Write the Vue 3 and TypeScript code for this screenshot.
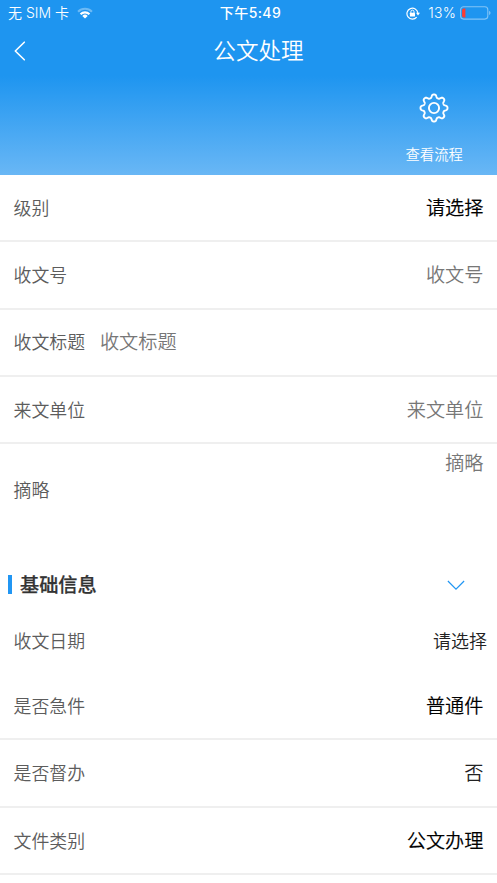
<script setup lang="ts">
interface Field {
  label: string
  value: string
  tone: 'strong' | 'hint' | 'dark'
  kind?: 'inline' | 'area' | 'date'
}

const mainFields: Field[] = [
  { label: '级别', value: '请选择', tone: 'strong' },
  { label: '收文号', value: '收文号', tone: 'hint' },
  { label: '收文标题', value: '收文标题', tone: 'hint', kind: 'inline' },
  { label: '来文单位', value: '来文单位', tone: 'hint' },
  { label: '摘略', value: '摘略', tone: 'hint', kind: 'area' },
]

const baseFields: Field[] = [
  { label: '收文日期', value: '请选择', tone: 'dark', kind: 'date' },
  { label: '是否急件', value: '普通件', tone: 'strong' },
  { label: '是否督办', value: '否', tone: 'dark' },
  { label: '文件类别', value: '公文办理', tone: 'strong' },
]

// Eight-toothed gear outline, with rounded teeth and valleys
function gearPath(): string {
  const points: string[] = []
  const steps = 192
  for (let i = 0; i < steps; i++) {
    const a = (i / steps) * Math.PI * 2
    const r = 11.9 + 1.6 * Math.tanh(1.6 * Math.cos(8 * a)) / Math.tanh(1.6)
    points.push(`${(15 + r * Math.cos(a)).toFixed(2)} ${(15 + r * Math.sin(a)).toFixed(2)}`)
  }
  return `M${points.join('L')}Z`
}

const gear = gearPath()
</script>

<template>
  <div class="page">
    <header class="top">
      <div class="status">
        <div class="side left">
          <span>无 SIM 卡</span>
          <svg class="wifi" width="16" height="12" viewBox="0 0 16 12">
            <path d="M0.3 3.9A11 11 0 0 1 15.7 3.9L14.2 5.4A8.8 8.8 0 0 0 1.8 5.4Z" fill="#fff" opacity=".35" />
            <path d="M2.8 6.4A7.4 7.4 0 0 1 13.2 6.4L11.7 7.9A5.3 5.3 0 0 0 4.3 7.9Z" fill="#fff" />
            <path d="M5.3 8.9A3.9 3.9 0 0 1 10.7 8.9L8 11.6Z" fill="#fff" />
          </svg>
        </div>
        <span class="clock">下午5:49</span>
        <div class="side right">
          <svg class="lock" width="14" height="13" viewBox="0 0 14 13">
            <path d="M10.7 10.2A5.5 5.5 0 1 1 11.9 6" fill="none" stroke="#fff" stroke-width="1.2" />
            <path d="M10 5.7H14L12 8.5Z" fill="#fff" />
            <rect x="3.9" y="5.7" width="5.1" height="3.8" rx=".5" fill="#fff" />
            <path d="M4.9 6V4.7a1.55 1.55 0 0 1 3.1 0V6" fill="none" stroke="#fff" stroke-width="1" />
          </svg>
          <span class="percent">13%</span>
          <svg class="battery" width="31" height="14" viewBox="0 0 31 14">
            <rect x=".6" y=".7" width="27.2" height="12.4" rx="3" fill="none" stroke="#fff" stroke-opacity=".45" stroke-width="1.1" />
            <path d="M29.2 4.8Q31.8 7 29.2 9.2Z" fill="#fff" opacity=".5" />
            <path d="M3.7 2.4H5.4V11.4H3.7A1.6 1.6 0 0 1 2.1 9.8V4A1.6 1.6 0 0 1 3.7 2.4Z" fill="#ff3b30" />
          </svg>
        </div>
      </div>
      <nav class="nav">
        <svg class="back" width="12" height="20" viewBox="0 0 12 20">
          <path d="M10.3 1.2L1.3 10L10.3 18.8" fill="none" stroke="#fff" stroke-width="1.6" stroke-linecap="round" stroke-linejoin="round" />
        </svg>
        <h1>公文处理</h1>
      </nav>
      <div class="banner">
        <div class="flow">
          <svg width="30" height="30" viewBox="0 0 30 30" fill="none" stroke="#fff" stroke-width="1.9">
            <path :d="gear" stroke-linejoin="round" />
            <circle cx="15" cy="15" r="5.1" />
          </svg>
          <span>查看流程</span>
        </div>
      </div>
    </header>

    <main>
      <section>
        <div v-for="f in mainFields" :key="f.label" class="row" :class="f.kind">
          <span class="label">{{ f.label }}</span>
          <span class="value" :class="f.tone">{{ f.value }}</span>
        </div>
      </section>
      <section>
        <div class="heading">
          <i class="bar"></i>
          <h2>基础信息</h2>
          <svg class="chevron" width="18" height="11" viewBox="0 0 18 11">
            <path d="M.9 1L9 9.2L17.1 1" fill="none" stroke="#2196f3" stroke-width="1.2" />
          </svg>
        </div>
        <div v-for="f in baseFields" :key="f.label" class="row" :class="f.kind">
          <span class="label">{{ f.label }}</span>
          <span class="value" :class="f.tone">{{ f.value }}</span>
        </div>
      </section>
    </main>
  </div>
</template>

<style>
body {
  background: #fff;
}
</style>

<style scoped>
.page {
  width: 100%;
  height: 883px;
  overflow: hidden;
  background: #fff;
  font-family: Inter, "Noto Sans CJK SC", sans-serif;
  font-weight: 350;
}
.top {
  height: 175px;
  color: #fff;
  background: linear-gradient(#1e95f0 0, #1e95f0 76px, #69b7f5 175px);
}
.status {
  display: grid;
  grid-template-columns: 1fr auto 1fr;
  align-items: center;
  height: 26px;
  padding: 0 6px 0 8px;
  font-size: 14px;
  line-height: 26px;
}
.side {
  display: flex;
  align-items: center;
}
.right {
  justify-content: flex-end;
}
.wifi {
  margin-left: 8px;
}
.clock {
  padding-left: 2px;
  font-weight: 500;
  letter-spacing: .4px;
}
.lock {
  margin-right: 8px;
}
.percent {
  margin-right: 4px;
  letter-spacing: .2px;
}
.nav {
  display: grid;
  grid-template-columns: 30px 1fr 30px;
  align-items: center;
  height: 50px;
  padding: 0 0 0 14px;
}
h1 {
  margin: 0;
  padding-left: 6px;
  text-align: center;
  font-size: 22.6px;
  font-weight: 350;
  line-height: 50px;
}
.banner {
  display: flex;
  justify-content: flex-end;
  padding: 17px 34px 0 0;
}
.flow {
  display: flex;
  flex-direction: column;
  align-items: center;
  gap: 21px;
  font-size: 14.4px;
  line-height: 22px;
}
.row {
  display: flex;
  align-items: center;
  justify-content: space-between;
  box-sizing: border-box;
  height: 67.3px;
  padding: 0 13.5px 1.5px;
  border-bottom: 2px solid #efefef;
}
.label {
  color: #5c5c5c;
  font-size: 17.9px;
}
.value {
  font-size: 19.2px;
}
.strong {
  color: #000;
  -webkit-text-stroke: .15px currentColor;
}
.hint {
  color: #777;
}
.dark {
  color: #222;
}
.inline {
  justify-content: flex-start;
  gap: 14.8px;
}
.area {
  height: 92px;
  border-bottom: 0;
}
.area .value {
  align-self: flex-start;
  padding-top: 4px;
}
.heading {
  display: flex;
  align-items: center;
  height: 96px;
  padding: 0 32px 0 8px;
}
.bar {
  width: 4px;
  height: 19px;
  margin-right: 8px;
  background: #2196f3;
}
.chevron {
  margin-top: 2px;
}
h2 {
  flex: 1;
  margin: 0;
  color: #333;
  font-size: 19.2px;
  font-weight: 500;
  -webkit-text-stroke: .25px currentColor;
}
.date {
  height: 17px;
  margin-bottom: 24px;
  border-bottom: 0;
  padding-right: 10px;
}
.date .value {
  font-size: 18px;
}
</style>
